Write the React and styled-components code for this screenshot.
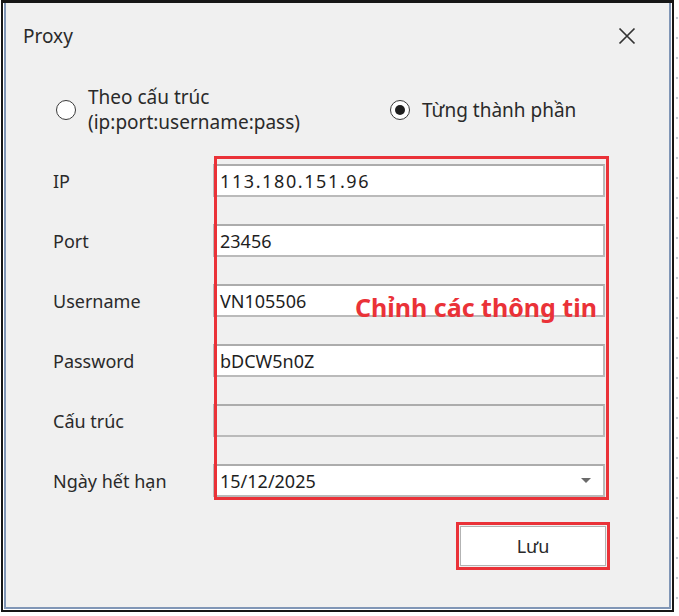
import React from 'react';
import styled, { createGlobalStyle } from 'styled-components';

const GlobalStyle = createGlobalStyle`
  body {
    margin: 0;
    background: #ffffff;
    font-family: 'Noto Sans', 'Liberation Sans', sans-serif;
    color: #2a2a2a;
  }
`;

const Page = styled.div`
  display: flex;
  width: 679px;
  height: 616px;
  padding-left: 1px;
  box-sizing: border-box;
`;

const Window = styled.div`
  display: flex;
  width: 673px;
  height: 612px;
  box-sizing: border-box;
  border: 2px solid #161616;
  border-top-width: 3px;
  padding: 0 1px 1px;
`;

const Frame = styled.div`
  flex: 1;
  display: flex;
  flex-direction: column;
  background: #f0f0f0;
  border: 2px solid #8096b6;
  border-top: none;
`;

const DotStrip = styled.div`
  flex: 1;
  background-image: radial-gradient(circle, #c3c9d2 1px, transparent 1.6px);
  background-size: 6px 20px;
  background-position: 0 8px;
`;

const TitleBar = styled.div`
  display: flex;
  align-items: center;
  justify-content: space-between;
  height: 66px;
  padding: 0 32px 0 17px;
`;

const Title = styled.span`
  font-size: 19px;
`;

const CloseButton = styled.button`
  display: flex;
  padding: 0;
  border: none;
  background: none;
`;

const RadioRow = styled.div`
  display: grid;
  grid-template-columns: 334px auto;
  align-items: center;
  height: 82px;
  padding-left: 50px;
`;

const Option = styled.label`
  display: flex;
  align-items: center;
  gap: 12px;
  font-size: 19px;
  line-height: 25px;
`;

const Radio = styled.span`
  display: flex;
  align-items: center;
  justify-content: center;
  width: 20px;
  height: 20px;
  box-sizing: border-box;
  border-radius: 50%;
  border: 1.5px solid #3a3a3a;
  background: #ffffff;

  &::after {
    content: '';
    width: 10px;
    height: 10px;
    border-radius: 50%;
    background: #1f1f1f;
    display: ${({ checked }) => (checked ? 'block' : 'none')};
  }
`;

const Form = styled.div`
  display: flex;
  padding: 13px 0 0 47px;
`;

const LabelColumn = styled.div`
  display: flex;
  flex-direction: column;
  gap: 27px;
  width: 160px;
`;

const Label = styled.div`
  height: 33px;
  display: flex;
  align-items: center;
  font-size: 18px;
`;

const FieldColumn = styled.div`
  position: relative;
  display: flex;
  flex-direction: column;
  gap: 27px;
  width: 392px;

  &::after {
    content: '';
    position: absolute;
    inset: -8px -4px -3px 1px;
    border: 3px solid #ea3238;
    pointer-events: none;
  }
`;

const Field = styled.div`
  display: flex;
  align-items: center;
  justify-content: space-between;
  height: 33px;
  box-sizing: border-box;
  padding: 0 12px 0 5px;
  border: 2px solid #bababa;
  border-top-color: #acacac;
  background: ${({ disabled }) => (disabled ? '#f0f0f0' : '#ffffff')};
  font-size: 18px;
  color: #1e1e1e;
  letter-spacing: ${({ spaced }) => (spaced ? '1.6px' : '0')};
`;

const Caret = styled.span`
  width: 0;
  height: 0;
  border-left: 5px solid transparent;
  border-right: 5px solid transparent;
  border-top: 5px solid #6a6a6a;
`;

const Note = styled.span`
  position: absolute;
  left: 142px;
  top: 130px;
  font-size: 25px;
  font-weight: 700;
  line-height: 27px;
  color: #ea3238;
  white-space: nowrap;
`;

const Footer = styled.div`
  display: flex;
  justify-content: flex-end;
  padding: 25px 59px 0 0;
`;

const SaveMark = styled.div`
  padding: 1px;
  border: 3px solid #ea3238;
`;

const SaveButton = styled.button`
  width: 146px;
  height: 40px;
  border: 1px solid #b3b3b3;
  background: #ffffff;
  font-family: inherit;
  font-size: 18px;
  color: #2a2a2a;
`;

const rows = [
  { label: 'IP', value: '113.180.151.96', spaced: true },
  { label: 'Port', value: '23456' },
  { label: 'Username', value: 'VN105506' },
  { label: 'Password', value: 'bDCW5n0Z' },
  { label: 'Cấu trúc', value: '', disabled: true },
  { label: 'Ngày hết hạn', value: '15/12/2025', select: true },
];

const App = () => (
  <>
    <GlobalStyle />
    <Page>
      <Window>
        <Frame>
          <TitleBar>
            <Title>Proxy</Title>
            <CloseButton aria-label="Close">
              <svg width="20" height="20" viewBox="0 0 20 20">
                <path d="M2.5 2.5 L17.5 17.5 M17.5 2.5 L2.5 17.5" stroke="#333" strokeWidth="1.7" />
              </svg>
            </CloseButton>
          </TitleBar>

          <RadioRow>
            <Option>
              <Radio />
              <span>
                Theo cấu trúc
                <br />
                (ip:port:username:pass)
              </span>
            </Option>
            <Option>
              <Radio checked />
              <span>Từng thành phần</span>
            </Option>
          </RadioRow>

          <Form>
            <LabelColumn>
              {rows.map(({ label }) => (
                <Label key={label}>{label}</Label>
              ))}
            </LabelColumn>
            <FieldColumn>
              {rows.map(({ label, value, disabled, select, spaced }) => (
                <Field key={label} disabled={disabled} spaced={spaced}>
                  <span>{value}</span>
                  {select && <Caret />}
                </Field>
              ))}
              <Note>Chỉnh các thông tin</Note>
            </FieldColumn>
          </Form>

          <Footer>
            <SaveMark>
              <SaveButton>Lưu</SaveButton>
            </SaveMark>
          </Footer>
        </Frame>
      </Window>
      <DotStrip />
    </Page>
  </>
);

export default App;
